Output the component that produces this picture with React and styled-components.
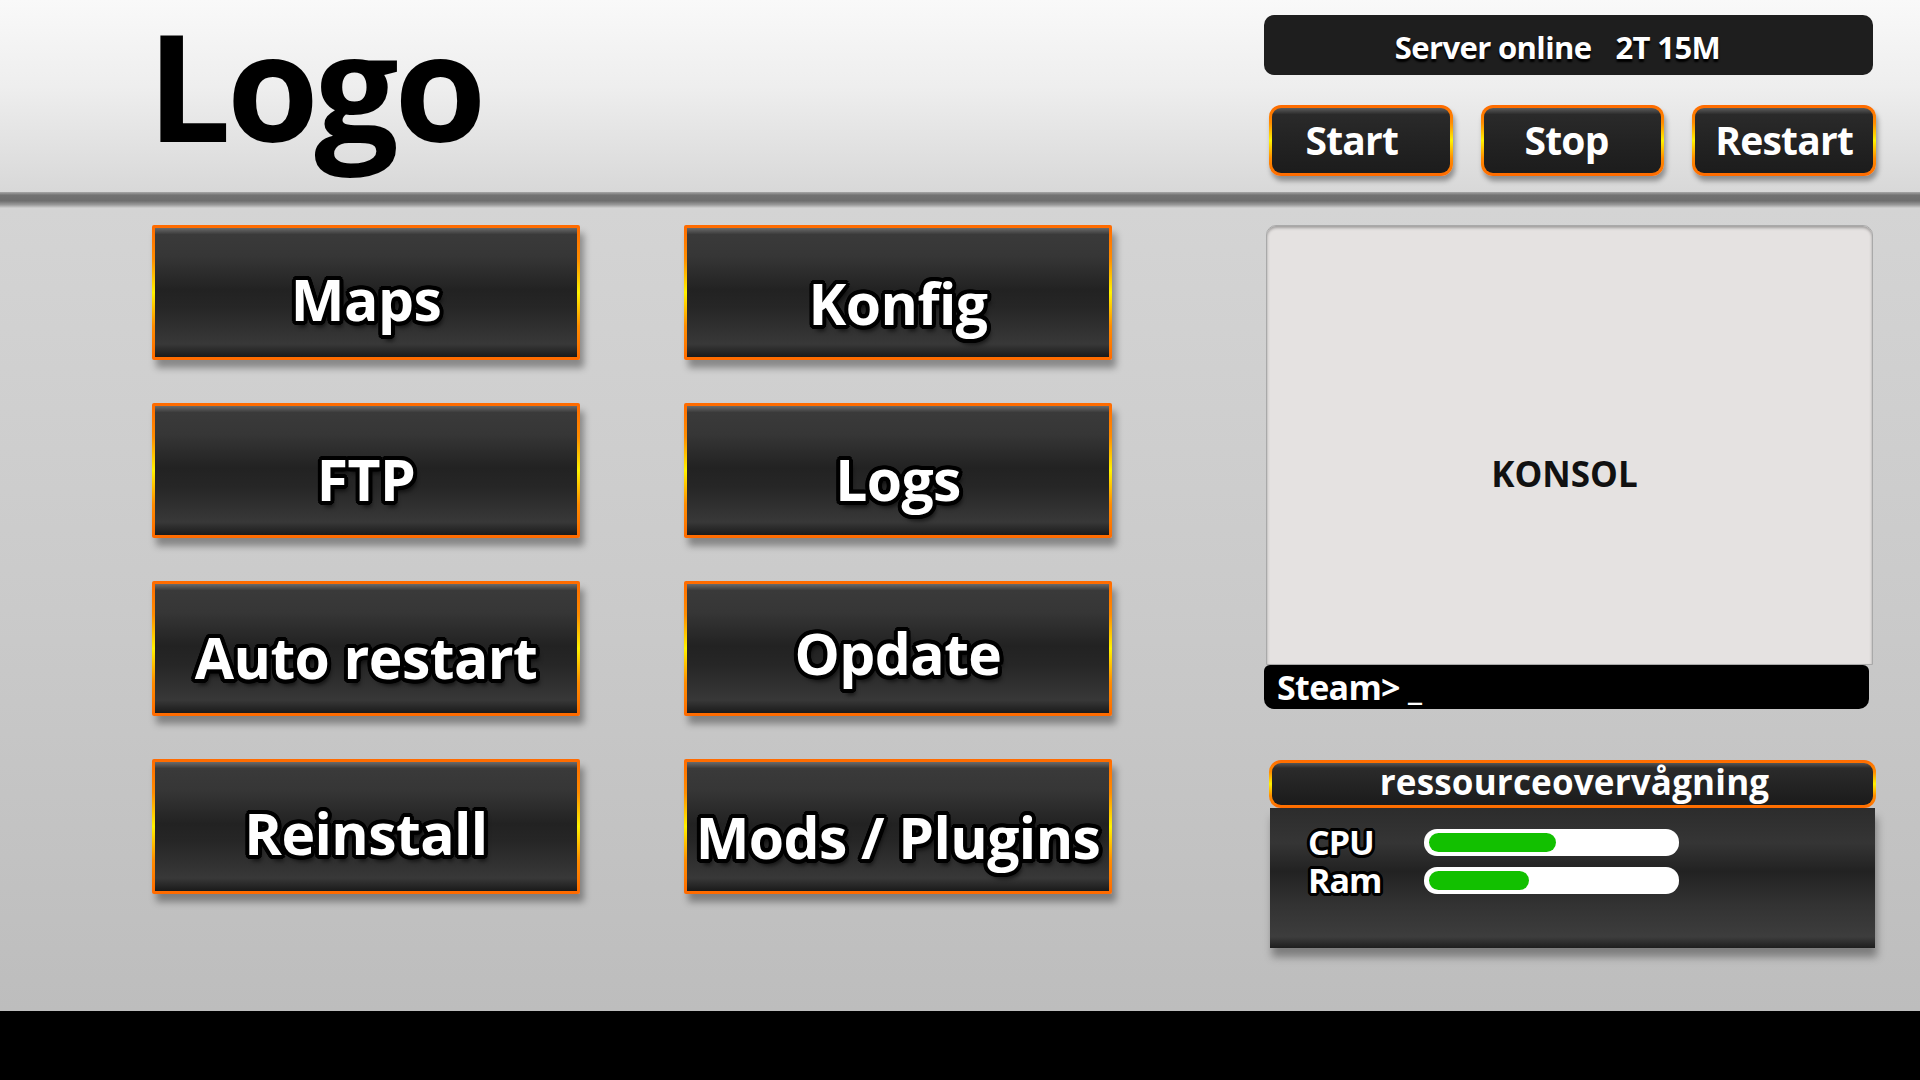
import React from 'react'
import styled, { createGlobalStyle } from 'styled-components'

const font = `"Open Sans", "Noto Sans", "DejaVu Sans", sans-serif`;

// black outline around white letters, built from offset shadows
const outline = (w, extra = '') => {
    const parts = [];
    for (let a = 0; a < 360; a += 22.5) {
        const r = (a * Math.PI) / 180;
        parts.push(`${(Math.cos(r) * w).toFixed(1)}px ${(Math.sin(r) * w).toFixed(1)}px 0 #000`);
    }
    if (extra) parts.push(extra);
    return parts.join(', ');
};

const frame = `linear-gradient(to bottom, #ff6a00 0%, #ff8c00 25%, #fff200 50%, #ff8c00 75%, #ff6a00 100%)`;

const GlobalStyle = createGlobalStyle`
    html, body {
        margin: 0;
        padding: 0;
        background: #000;
    }
    body {
        font-family: ${font};
    }
`;

const Page = styled.div`
    width: 1920px;
    height: 1080px;
    display: flex;
    flex-direction: column;
    overflow: hidden;
`;

const Header = styled.header`
    height: 192px;
    flex-shrink: 0;
    display: flex;
    justify-content: space-between;
    background: linear-gradient(to bottom, #f9f9f9 0%, #eeeeee 45%, #d8d8d8 100%);
`;

const Logo = styled.h1`
    margin: 3px 0 0 147px;
    padding-right: 8px;
    font-family: ${font};
    font-weight: 700;
    font-size: 149px;
    line-height: 1.1;
    letter-spacing: -0.03em;
    color: #000;
`;

const ControlColumn = styled.div`
    width: 612px;
    margin-right: 44px;
    padding-top: 15px;
    display: flex;
    flex-direction: column;
`;

const StatusBar = styled.div`
    height: 60px;
    width: 609px;
    box-sizing: border-box;
    border-radius: 10px;
    background: #1e1e1e;
    display: flex;
    align-items: center;
    justify-content: center;
    gap: 24px;
    padding: 4px 22px 0 0;
    color: #fff;
    font-weight: 700;
    font-size: 31px;
    letter-spacing: -0.02em;
    text-shadow: 0 3px 2px #000;
`;

const ButtonRow = styled.div`
    margin-top: 30px;
    padding-left: 5px;
    display: flex;
    gap: 28px;
`;

const PowerButton = styled.button`
    width: 184px;
    height: 71px;
    border: 3px solid transparent;
    border-radius: 12px;
    background:
        linear-gradient(to bottom, #5c5c5c 0%, #2a2a2a 10%, #232323 50%, #1c1c1c 100%) padding-box,
        ${frame} border-box;
    box-shadow: 2px 5px 5px rgba(0, 0, 0, 0.35);
    color: #fff;
    font-family: ${font};
    font-weight: 700;
    font-size: 39px;
    letter-spacing: -0.02em;
    padding: 0 ${p => p.$nudge || 0}px 2px 0;
    cursor: pointer;
`;

const Divider = styled.div`
    height: 16px;
    flex-shrink: 0;
    background: linear-gradient(to bottom, #a8a8a8 0%, #727272 20%, #6e6e6e 55%, #9a9a9a 80%, #d2d2d2 100%);
`;

const Main = styled.main`
    flex: 1;
    display: flex;
    justify-content: space-between;
    background: linear-gradient(to bottom, #d4d4d4 0%, #cacaca 50%, #bdbdbd 100%);
`;

const MenuGrid = styled.div`
    margin: 17px 0 0 152px;
    display: grid;
    grid-template-columns: 428px 428px;
    grid-auto-rows: 135px;
    column-gap: 104px;
    row-gap: 43px;
    align-content: start;
`;

const MenuButton = styled.button`
    border: 3px solid transparent;
    border-radius: 2px;
    background:
        linear-gradient(to bottom, #6a6a6a 0%, #3a3a3a 5%, #363636 22%, #222 48%, #262626 62%, #383838 90%, #1a1a1a 100%) padding-box,
        ${frame} border-box;
    box-shadow: 4px 8px 7px rgba(0, 0, 0, 0.35);
    color: #fff;
    font-family: ${font};
    font-weight: 700;
    font-size: 57px;
    letter-spacing: -0.01em;
    white-space: nowrap;
    padding: ${p => p.$shift || 16}px 0 0;
    text-shadow: ${outline(4, '3px 6px 4px rgba(0,0,0,0.6)')};
    cursor: pointer;
`;

const SideColumn = styled.div`
    width: 612px;
    margin-right: 44px;
    padding-top: 17px;
    display: flex;
    flex-direction: column;
`;

const Console = styled.div`
    height: 440px;
    margin: 0 3px 0 2px;
    box-sizing: border-box;
    border: 1px solid #a9a9a9;
    border-radius: 10px 10px 0 0;
    background: #e5e2e1;
    box-shadow: inset 0 2px 3px rgba(0, 0, 0, 0.3);
    display: flex;
    align-items: center;
    justify-content: center;
    padding: 56px 10px 0 0;
    color: #111;
    font-weight: 700;
    font-size: 35px;
`;

const Prompt = styled.div`
    height: 44px;
    margin-right: 7px;
    border-radius: 6px 6px 10px 10px;
    background: #000;
    color: #fff;
    font-weight: 700;
    font-size: 34px;
    letter-spacing: -0.02em;
    line-height: 44px;
    padding-left: 13px;
`;

const Monitor = styled.section`
    margin: 51px 0 0 5px;
    width: 607px;
    display: flex;
    flex-direction: column;
`;

const MonitorTitle = styled.div`
    height: 48px;
    box-sizing: border-box;
    border: 3px solid transparent;
    border-radius: 12px;
    background:
        linear-gradient(to bottom, #555 0%, #2b2b2b 12%, #232323 55%, #1b1b1b 100%) padding-box,
        ${frame} border-box;
    color: #fff;
    font-weight: 700;
    font-size: 35px;
    letter-spacing: 0.005em;
    line-height: 38px;
    text-align: center;
    padding-left: 4px;
    position: relative;
    z-index: 1;
`;

const MonitorBody = styled.div`
    height: 140px;
    margin: 0 1px;
    box-sizing: border-box;
    padding: 21px 0 0 38px;
    background: linear-gradient(to bottom, #2c2c2c 0%, #353535 25%, #222 45%, #333 70%, #3d3d3d 92%, #1e1e1e 100%);
    box-shadow: 2px 9px 8px rgba(0, 0, 0, 0.35);
    display: flex;
    flex-direction: column;
    gap: 11px;
`;

const StatRow = styled.div`
    display: flex;
    align-items: center;
    height: 27px;
`;

const StatLabel = styled.span`
    width: 116px;
    color: #fff;
    font-weight: 700;
    font-size: 34px;
    line-height: 27px;
    letter-spacing: -0.03em;
    text-shadow: ${outline(3)};
`;

const Bar = styled.div`
    width: 255px;
    height: 27px;
    box-sizing: border-box;
    padding: 4px 5px;
    border-radius: 13px;
    background: #fff;
`;

const BarFill = styled.div`
    height: 100%;
    border-radius: 10px;
    background: #12c000;
`;

const Footer = styled.footer`
    height: 69px;
    flex-shrink: 0;
    background: #000;
`;

const menu = [
    { label: 'Maps', shift: 12 },
    { label: 'Konfig', shift: 20 },
    { label: 'FTP', shift: 16 },
    { label: 'Logs', shift: 16 },
    { label: 'Auto restart', shift: 16 },
    { label: 'Opdate', shift: 8 },
    { label: 'Reinstall', shift: 12 },
    { label: 'Mods / Plugins', shift: 20 },
];

const stats = [
    { label: 'CPU', value: 52 },
    { label: 'Ram', value: 41 },
];

export default function App() {
    return (
        <Page>
            <GlobalStyle />
            <Header>
                <Logo>Logo</Logo>
                <ControlColumn>
                    <StatusBar>
                        <span>Server online</span>
                        <span>2T 15M</span>
                    </StatusBar>
                    <ButtonRow>
                        <PowerButton $nudge={18}>Start</PowerButton>
                        <PowerButton $nudge={12}>Stop</PowerButton>
                        <PowerButton>Restart</PowerButton>
                    </ButtonRow>
                </ControlColumn>
            </Header>
            <Divider />
            <Main>
                <MenuGrid>
                    {menu.map(item => (
                        <MenuButton key={item.label} $shift={item.shift}>{item.label}</MenuButton>
                    ))}
                </MenuGrid>
                <SideColumn>
                    <Console>KONSOL</Console>
                    <Prompt>Steam&gt; _</Prompt>
                    <Monitor>
                        <MonitorTitle>ressourceovervågning</MonitorTitle>
                        <MonitorBody>
                            {stats.map(s => (
                                <StatRow key={s.label}>
                                    <StatLabel>{s.label}</StatLabel>
                                    <Bar>
                                        <BarFill style={{ width: `${s.value}%` }} />
                                    </Bar>
                                </StatRow>
                            ))}
                        </MonitorBody>
                    </Monitor>
                </SideColumn>
            </Main>
            <Footer />
        </Page>
    )
}
